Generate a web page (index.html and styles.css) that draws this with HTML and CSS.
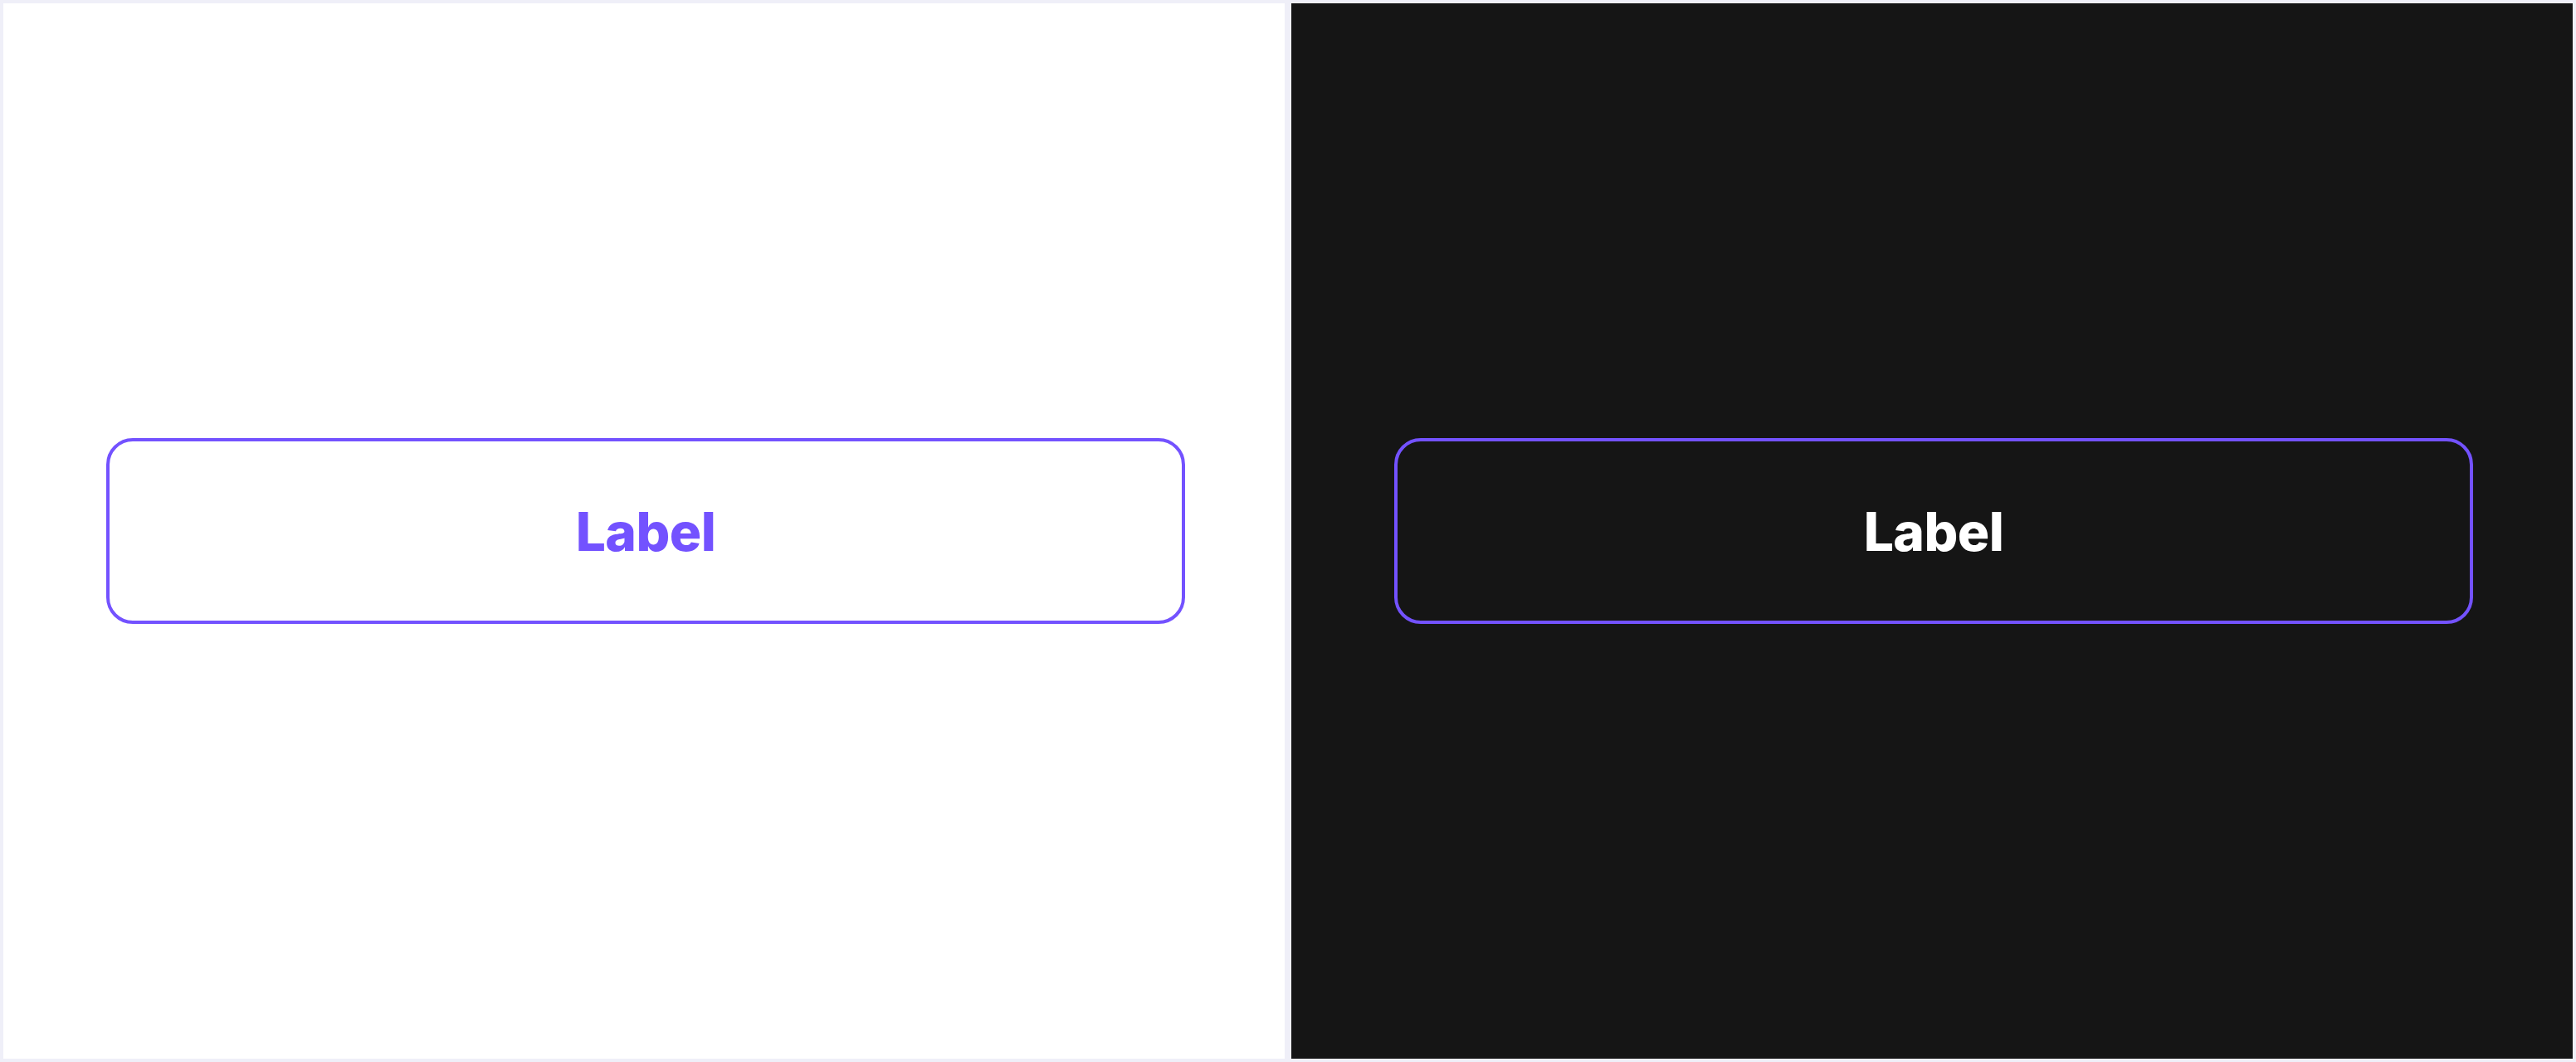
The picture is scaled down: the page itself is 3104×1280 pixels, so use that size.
FILE: index.html
```html
<!DOCTYPE html>
<html>
<head>
<meta charset="utf-8">
<link rel="stylesheet" href="styles.css">
</head>
<body>
<div class="frame">
  <div class="panel panel-light">
    <button class="btn btn-light">Label</button>
  </div>
  <div class="panel panel-dark">
    <button class="btn btn-dark">Label</button>
  </div>
</div>
</body>
</html>
```

FILE: styles.css
```css
html, body {
  margin: 0;
  padding: 0;
}
body {
  width: 3104px;
  height: 1280px;
  background: #efeff8;
  font-family: Inter, "Noto Sans", sans-serif;
}
.frame {
  box-sizing: border-box;
  width: 3104px;
  height: 1280px;
  padding: 4px;
  display: grid;
  grid-template-columns: 1544px 1544px;
  column-gap: 8px;
}
.panel {
  display: flex;
  align-items: center;
  justify-content: center;
}
.panel-light {
  background: #ffffff;
}
.panel-dark {
  background: #151515;
}
.btn {
  box-sizing: border-box;
  width: 1300px;
  height: 224px;
  border: 4px solid #7352ff;
  border-radius: 32px;
  background: transparent;
  font-family: Inter, "Noto Sans", sans-serif;
  font-size: 64px;
  font-weight: 800;
  letter-spacing: -0.5px;
  padding: 0;
  margin-left: 4px;
}
.btn-light {
  color: #7352ff;
}
.btn-dark {
  color: #ffffff;
}
```
